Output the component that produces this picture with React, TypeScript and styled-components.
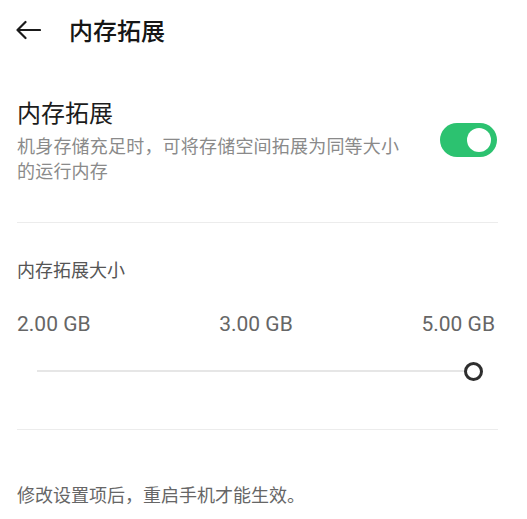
import styled, { createGlobalStyle } from 'styled-components';

const GlobalStyle = createGlobalStyle`
  body {
    margin: 0;
    background: #ffffff;
    font-family: "Noto Sans CJK SC", "Noto Sans", sans-serif;
  }
`;

const Page = styled.div`
  width: 527px;
  height: 519px;
  background: #fff;
  overflow: hidden;
`;

const Header = styled.header`
  height: 60px;
  display: flex;
  align-items: center;
  padding-left: 14px;
`;

const BackButton = styled.button`
  border: none;
  background: none;
  padding: 0;
  width: 28px;
  height: 28px;
  display: flex;
  align-items: center;
  justify-content: center;
  color: #1a1a1a;
`;

const PageTitle = styled.h1`
  margin: 0 0 0 27px;
  font-size: 24px;
  line-height: 32px;
  font-weight: 500;
  color: #161616;
`;

const Body = styled.div`
  padding: 0 32px 0 17px;
`;

const SwitchRow = styled.div`
  margin-top: 36px;
  display: flex;
  align-items: center;
  justify-content: space-between;
`;

const SwitchText = styled.div`
  width: 392px;
`;

const ItemTitle = styled.div`
  font-size: 24px;
  line-height: 32px;
  color: #1c1c1c;
`;

const ItemDesc = styled.div`
  margin-top: 5px;
  font-size: 18px;
  line-height: 25px;
  letter-spacing: 0.2px;
  color: #8a8a8a;
`;

const Toggle = styled.div<{ $on: boolean }>`
  width: 57px;
  height: 34px;
  margin-right: -2px;
  border-radius: 17px;
  background: ${(p) => (p.$on ? '#2cc270' : '#d6d6d6')};
  display: flex;
  align-items: center;
  justify-content: ${(p) => (p.$on ? 'flex-end' : 'flex-start')};
  padding: 0 6px;
  box-sizing: border-box;
`;

const ToggleKnob = styled.span`
  width: 24px;
  height: 24px;
  border-radius: 50%;
  background: #fff;
`;

const Divider = styled.hr<{ $top: number }>`
  border: none;
  height: 1px;
  background: #ececec;
  margin: ${(p) => p.$top}px -3px 0 0;
`;

const SectionLabel = styled.div`
  margin-top: 34px;
  font-size: 18px;
  line-height: 24px;
  color: #555;
`;

const ValueRow = styled.div`
  margin-top: 29px;
  display: flex;
  justify-content: space-between;
  font-family: Roboto, "Noto Sans", sans-serif;
  font-size: 21px;
  line-height: 28px;
  color: #666;
`;

const SliderRow = styled.div`
  margin-top: 21px;
  height: 24px;
  display: flex;
  align-items: center;
  padding: 0 12px 0 20px;
`;

const Track = styled.div`
  flex: 1;
  height: 2px;
  background: #e6e6e6;
`;

const Thumb = styled.span`
  width: 13px;
  height: 13px;
  border: 3px solid #2e2e2e;
  border-radius: 50%;
  background: #fff;
  flex-shrink: 0;
  margin-left: -1px;
`;

const Footnote = styled.p`
  margin: 52px 0 0;
  font-size: 18px;
  line-height: 24px;
  color: #666;
`;

const sizes = ['2.00 GB', '3.00 GB', '5.00 GB'];

const App = () => {
  return (
    <Page>
      <GlobalStyle />
      <Header>
        <BackButton aria-label="back">
          <svg width="26" height="20" viewBox="0 0 26 20" fill="none">
            <path
              d="M25 10H2.5M10.5 2L2.5 10l8 8"
              stroke="currentColor"
              strokeWidth="2.2"
              strokeLinecap="round"
              strokeLinejoin="round"
            />
          </svg>
        </BackButton>
        <PageTitle>内存拓展</PageTitle>
      </Header>
      <Body>
        <SwitchRow>
          <SwitchText>
            <ItemTitle>内存拓展</ItemTitle>
            <ItemDesc>机身存储充足时，可将存储空间拓展为同等大小的运行内存</ItemDesc>
          </SwitchText>
          <Toggle $on>
            <ToggleKnob />
          </Toggle>
        </SwitchRow>
        <Divider $top={39} />
        <SectionLabel>内存拓展大小</SectionLabel>
        <ValueRow>
          {sizes.map((s) => (
            <span key={s}>{s}</span>
          ))}
        </ValueRow>
        <SliderRow>
          <Track />
          <Thumb />
        </SliderRow>
        <Divider $top={46} />
        <Footnote>修改设置项后，重启手机才能生效。</Footnote>
      </Body>
    </Page>
  );
};

export default App;
